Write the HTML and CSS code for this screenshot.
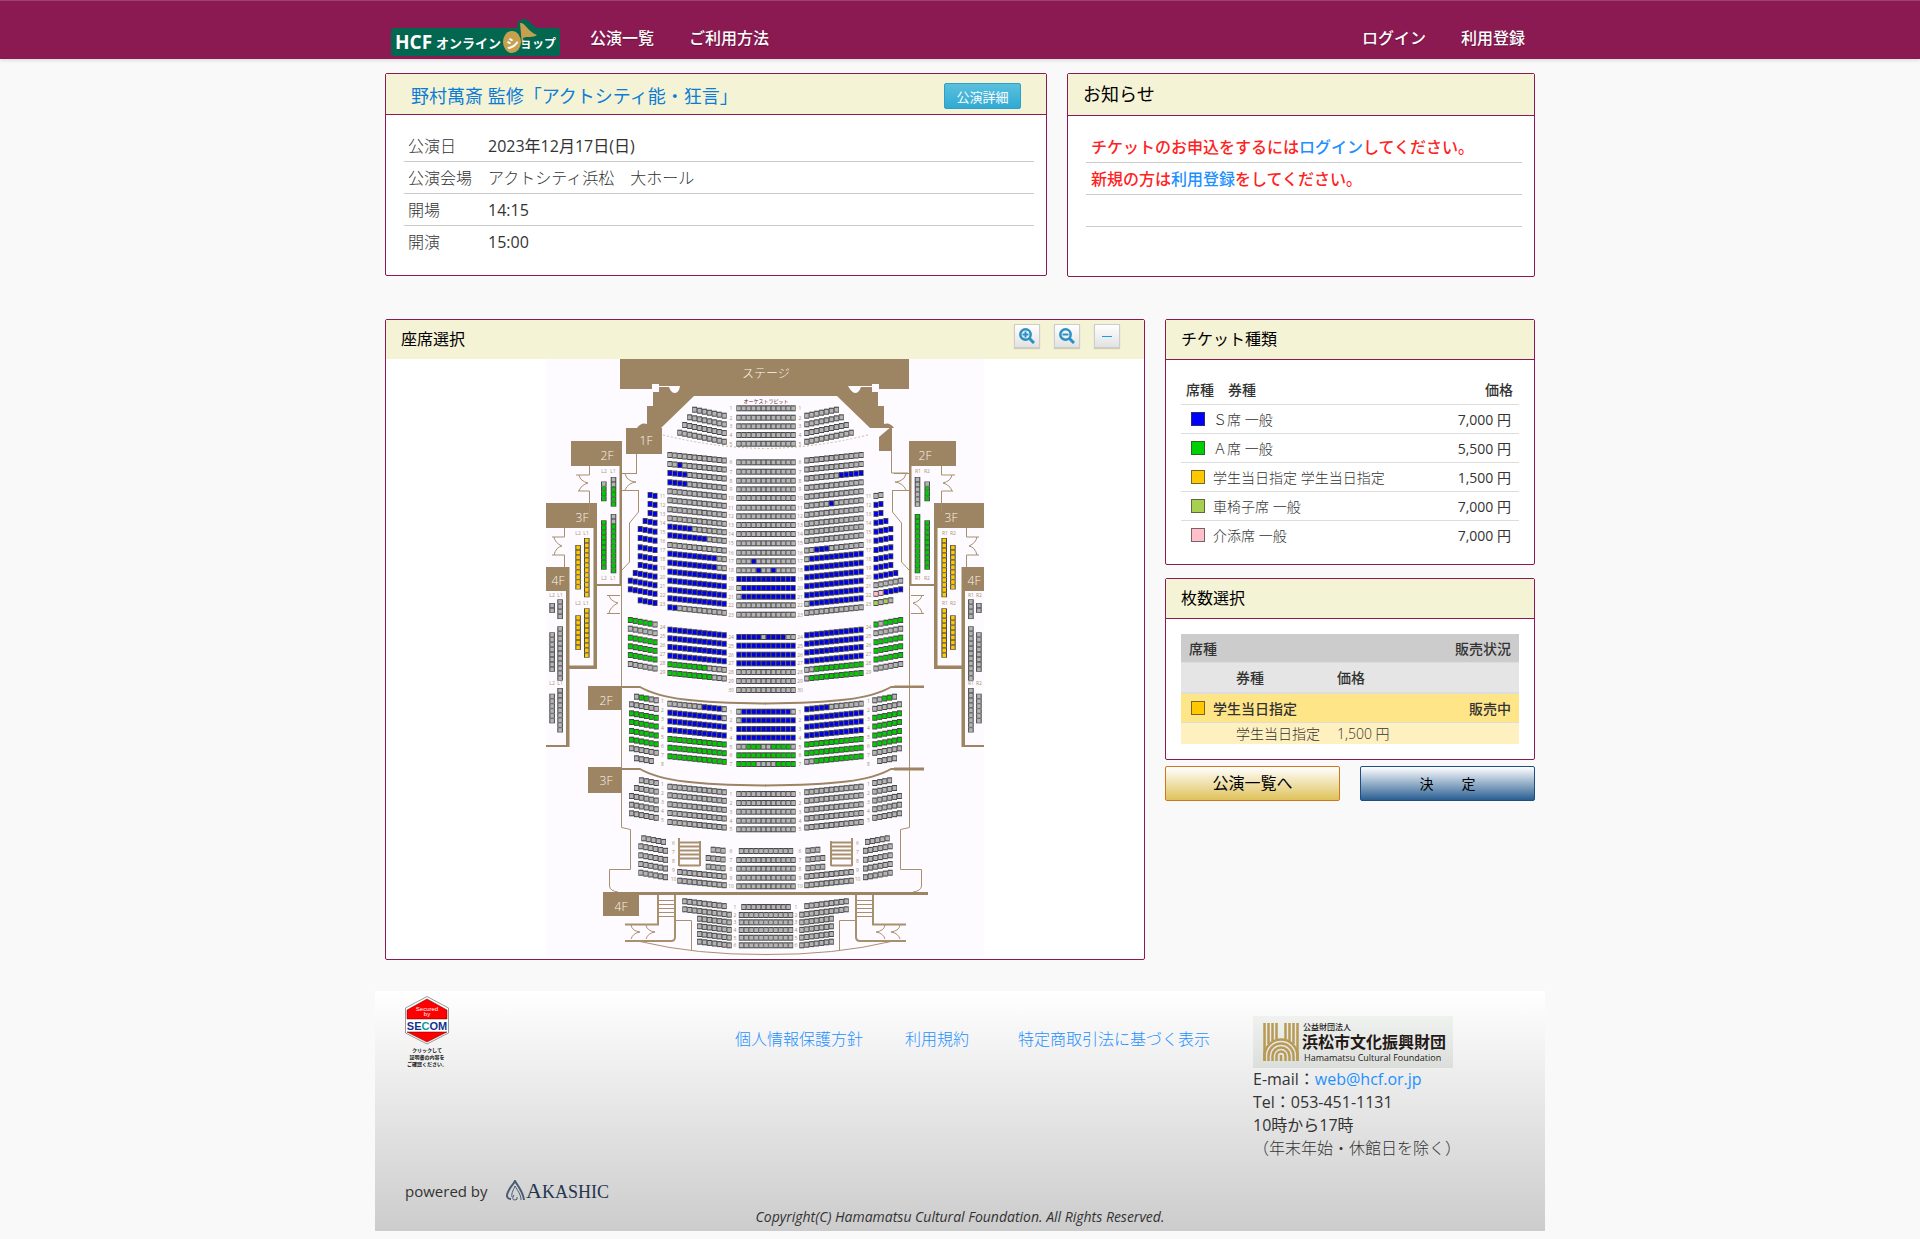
FILE: index.html
```html
<!DOCTYPE html>
<html lang="ja">

<head>
    <meta charset="UTF-8">
    <meta name="viewport" content="width=device-width, initial-scale=1.0">
    <link rel="stylesheet" href="styles.css">
    <title>HCFオンラインショップ</title>
</head>

<body>
    <header class="navbar">
        <div class="container navbar-inner">
            <a class="brand" href="#">
                <svg width="169" height="37" viewBox="0 0 169 37">
                    <path fill="#03664f" d="M3 9H126C126 3 129 0 133 0C138 0 138 4 146 9H166Q169 9 169 12V34Q169 37 166 37H3Q0 37 0 34V12Q0 9 3 9Z" />
                    <path fill="#c4a04f" d="M129 4C134 3 136 12 146 16C142 19 136 17 132 19L133 26H131Z" />
                    <ellipse cx="121" cy="23" rx="9" ry="11" fill="#c4a04f" />
                    <text x="4" y="30" class="logo-latin">HCF</text>
                    <text x="45" y="29" class="logo-kana">オンライン</text>
                    <text x="115" y="29" class="logo-kana">シ</text>
                    <text x="129" y="29" class="logo-kana logo-kana-end">ョップ</text>
                </svg>
            </a>
            <nav class="nav">
                <a href="#">公演一覧</a>
                <a href="#">ご利用方法</a>
            </nav>
            <nav class="nav nav-right">
                <a href="#">ログイン</a>
                <a href="#">利用登録</a>
            </nav>
        </div>
    </header>

    <main class="container main">
        <div class="row row-top">
            <section class="panel">
                <div class="panel-head event-head">
                    <h1><a href="#">野村萬斎 監修「アクトシティ能・狂言」</a></h1>
                    <button type="button" class="btn-info">公演詳細</button>
                </div>
                <dl class="event">
                    <div><dt>公演日</dt><dd>2023年12月17日(日)</dd></div>
                    <div><dt>公演会場</dt><dd class="hall">アクトシティ浜松　大ホール</dd></div>
                    <div><dt>開場</dt><dd>14:15</dd></div>
                    <div><dt>開演</dt><dd>15:00</dd></div>
                </dl>
            </section>
            <section class="panel">
                <div class="panel-head news-head">
                    <h2>お知らせ</h2>
                </div>
                <ul class="news">
                    <li>チケットのお申込をするには<a href="#">ログイン</a>してください。</li>
                    <li>新規の方は<a href="#">利用登録</a>をしてください。</li>
                    <li></li>
                </ul>
            </section>
        </div>

        <div class="row row-seat">
            <section class="panel">
                <div class="panel-head seat-head">
                    <h2>座席選択</h2>
                    <div class="zoom">
                        <button type="button" aria-label="拡大">
                            <svg width="16" height="16" viewBox="0 0 16 16">
                                <g fill="none" stroke="#2b90c4" stroke-width="2.500">
                                    <circle cx="6.500" cy="6.500" r="5.200" />
                                    <path stroke-width="2" d="M3.500 6.500H9.500M6.500 3.500V9.500" />
                                    <path stroke-width="3" d="M10.500 10.500L15 15" />
                                </g>
                            </svg>
                        </button>
                        <button type="button" aria-label="縮小">
                            <svg width="16" height="16" viewBox="0 0 16 16">
                                <g fill="none" stroke="#2b90c4" stroke-width="2.500">
                                    <circle cx="6.500" cy="6.500" r="5.200" />
                                    <path stroke-width="2" d="M3.500 6.500H9.500" />
                                    <path stroke-width="3" d="M10.500 10.500L15 15" />
                                </g>
                            </svg>
                        </button>
                        <button type="button" aria-label="閉じる">
                            <svg width="16" height="16" viewBox="0 0 16 16">
                                <path fill="#0fa3e6" d="M3 8H13V9H3Z" />
                            </svg>
                        </button>
                    </div>
                </div>
                <svg class="map" width="438" height="598" viewBox="0 0 438 598">
                    <defs>
                        <!-- left half of the hall, the right half is its mirror -->
                        <g id="half">
                            <path class="solid" d="M113 26V33H107V47H101V65Q95 63 91 69H115L148 37H220V26Z" />
                            <path class="solid" d="M29 82H76V226H73.500V107H29Z" />
                            <path class="solid" d="M0 144H51V225H76V227H51V310H23V306.500H47.500V169H0Z" />
                            <path class="solid" d="M0 208H23.500V388H0V386H20V232H0Z" />
                            <path class="thin" d="M75.500 226V468.500L84.500 470.500V510.500H63.500V527Q64 532 72 533" />
                            <path class="thin" d="M92.500 131V153L83.500 164V203L76 211" />
                            <path class="thin" d="M76 114.500H91M76 131.500H92M79 115Q80 120 85 122Q89 123 90 123Q82 124 79 131" />
                            <path class="thin" d="M43.500 107V116H30M43.500 152V132H32M33 116Q34 122 42 124Q35 126 33 132" />
                            <path class="thin" d="M18.500 169V178H6M18.500 208V196H6M8 178Q9 184 16 187Q10 188 8 196" />
                            <path class="thin" d="M74 236.500H61M74 254.500H61M63 236Q64 242 72 244Q64 248 63 254" />
                            <path class="dash" d="M117 76Q170 89 220 89.500" />
                            <path class="curve" d="M75 328H94C115 340 150 344 220 344.500" />
                            <path class="curve" d="M75 410H94C115 422 150 426 220 426.500" />
                            <path class="thin stair" d="M133 479V507M154 482V507M133 483.500H154M133 487.500H154M133 491.500H154M133 495.500H154M133 499.500H154M133 506.500H154" />
                            <path class="thin stair" d="M112 536V565M129 536V578Q129 582 125 582H79M79 565.500H113" />
                            <path class="thin" d="M112 541.500H129M112 545.500H129M112 549.500H129M112 553.500H129M112 557.500H129" />
                            <path class="thin" d="M130 561.500H145.500V591M94 582.500Q150 596 220 595.500" />
                            <path class="thin" d="M85 566Q86 572 94 573Q87 574 85 580M100 566Q101 572 109 573Q102 574 100 580" />
                        </g>
                    </defs>
                    <rect width="438" height="598" fill="#fdfbff" />
                    <path class="solid" d="M74 0H363V30H74Z" />
                    <use href="#half" />
                    <use href="#half" transform="matrix(-1 0 0 1 439 0)" />
                    <path fill="#fdfbff" d="M106 25H113V27H134Q133 34 129 34Q125 34 123 28H113V30H106ZM333 25H326V27H302Q306 34 309 34Q313 34 315 28H326V30H333Z" />
                    <path class="solid" d="M25 82H30V107H25ZM80 69H116V95H80ZM333 78L346 67V92H333Z" />
                    <path class="solid" d="M42 327H76V351H42ZM42 408H76V434H42ZM57 533H382V536H57ZM57 533H93V557H57Z" />
                    <path class="solid" d="M348 326.500H378V329H348ZM348 408.500H378V411.500H348Z" />
                    <path class="thin" d="M90.500 95V114M345.500 92V114H362" />
                    <g class="floor">
                        <text x="100" y="86">1F</text>
                        <text x="61" y="101">2F</text>
                        <text x="379" y="101">2F</text>
                        <text x="36" y="163">3F</text>
                        <text x="405" y="163">3F</text>
                        <text x="12" y="226">4F</text>
                        <text x="428" y="226">4F</text>
                        <text x="60" y="346">2F</text>
                        <text x="60" y="426">3F</text>
                        <text x="75" y="552">4F</text>
                        <text x="220" y="19">ステージ</text>
                    </g>
                    <text class="pit" x="220" y="44">オーケストラピット</text>
                    <g id="seats"></g>
                    <g id="labels" class="labels"></g>
                </svg>
            </section>

            <div class="side">
                <section class="panel">
                    <div class="panel-head">
                        <h2>チケット種類</h2>
                    </div>
                    <table class="types">
                        <thead>
                            <tr><th>席種　券種</th><th class="num">価格</th></tr>
                        </thead>
                        <tbody>
                            <tr><td><span class="swatch s"></span>Ｓ席 一般</td><td class="num">7,000 円</td></tr>
                            <tr><td><span class="swatch a"></span>Ａ席 一般</td><td class="num">5,500 円</td></tr>
                            <tr><td><span class="swatch student"></span>学生当日指定 学生当日指定</td><td class="num">1,500 円</td></tr>
                            <tr><td><span class="swatch wheel"></span>車椅子席 一般</td><td class="num">7,000 円</td></tr>
                            <tr><td><span class="swatch helper"></span>介添席 一般</td><td class="num">7,000 円</td></tr>
                        </tbody>
                    </table>
                </section>

                <section class="panel">
                    <div class="panel-head">
                        <h2>枚数選択</h2>
                    </div>
                    <table class="count">
                        <colgroup>
                            <col class="col-indent">
                            <col class="col-name">
                            <col>
                            <col>
                        </colgroup>
                        <tr class="count-head"><th colspan="2">席種</th><th colspan="2" class="num">販売状況</th></tr>
                        <tr class="count-sub"><th></th><th>券種</th><th colspan="2">価格</th></tr>
                        <tr class="count-seat"><th colspan="2"><span class="swatch student"></span>学生当日指定</th><th colspan="2" class="num">販売中</th></tr>
                        <tr class="count-item"><td></td><td>学生当日指定</td><td colspan="2">1,500 円</td></tr>
                    </table>
                </section>

                <div class="actions">
                    <button type="button" class="btn-back">公演一覧へ</button>
                    <button type="button" class="btn-ok">決　　定</button>
                </div>
            </div>
        </div>
    </main>

    <footer class="container footer">
        <a class="secom" href="#">
            <svg width="44" height="72" viewBox="0 0 44 72">
                <path fill="#fff" stroke="#999" d="M22 .500L43.500 12V37L22 48L.500 37V12Z" />
                <path fill="#f00" stroke="#600" stroke-width=".500" d="M22 3L42 14V23H2V14ZM2 36H42L22 46Z" />
                <text x="22" y="15" class="secom-small">Secured</text>
                <text x="22" y="20" class="secom-small">by</text>
                <text x="22" y="34" class="secom-name">SE<tspan fill="#0a9a92">C</tspan>OM</text>
                <text x="22" y="56" class="secom-note">クリックして</text>
                <text x="22" y="63" class="secom-note">証明書の内容を</text>
                <text x="22" y="70" class="secom-note">ご確認ください。</text>
            </svg>
        </a>
        <nav class="footer-links">
            <a href="#">個人情報保護方針</a>
            <a href="#">利用規約</a>
            <a href="#">特定商取引法に基づく表示</a>
        </nav>
        <div class="contact">
            <svg width="200" height="52" viewBox="0 0 200 52">
                <defs>
                    <linearGradient id="plate" x2="0" y2="1">
                        <stop stop-color="#f0f2f0" />
                        <stop offset="1" stop-color="#dcdedc" />
                    </linearGradient>
                </defs>
                <rect width="200" height="52" fill="url(#plate)" />
                <g fill="none" stroke="#b89a55" stroke-width="2.500">
                    <path d="M11.500 7V45M15.500 7V28M19.500 7V25M23.500 7V23M32.500 7V23M36.500 7V25M40.500 7V28M44.500 7V45" />
                    <path d="M11.500 45V40A16.500 16.500 0 0 1 44.500 40V45M15.500 45V40A12.500 12.500 0 0 1 40.500 40V45M19.500 45V40A8.500 8.500 0 0 1 36.500 40V45M23.500 45V40A4.500 4.500 0 0 1 32.500 40V45M28 45V39" />
                </g>
                <text x="50" y="14" class="hcf-type">公益財団法人</text>
                <text x="49" y="32" class="hcf-name">浜松市文化振興財団</text>
                <text x="51" y="45" class="hcf-en">Hamamatsu Cultural Foundation</text>
            </svg>
            <p>E-mail：<a href="#">web@hcf.or.jp</a></p>
            <p>Tel：053-451-1131</p>
            <p>10時から17時</p>
            <p class="closed">（年末年始・休館日を除く）</p>
        </div>
        <div class="powered">
            powered by
            <svg width="112" height="22" viewBox="0 0 112 22">
                <g fill="none" stroke="#4a5b73">
                    <path stroke-width="2" d="M5 19C1 19 0 16 2 12C4 7 7 5 9 1C11 5 17 11 18 20" />
                    <path d="M6 17C5 13 8 9 9 6C11 10 15 14 15 20M8 15Q5 20 9 20Q12 20 11 17" />
                </g>
                <text x="20" y="18" class="akashic"><tspan class="akashic-big">A</tspan>KASHIC</text>
            </svg>
        </div>
        <p class="copyright">Copyright(C) Hamamatsu Cultural Foundation. All Rights Reserved.</p>
    </footer>

    <script src="seats.js"></script>
</body>

</html>
```

FILE: styles.css
```css
* {
    box-sizing: border-box;
}

body {
    margin: 0;
    padding-bottom: 8px;
    background-color: #f9f9f9;
    color: #333;
    font-family: "Open Sans", "Noto Sans CJK JP", sans-serif;
    font-size: 16px;
    line-height: 23px;
}

h1,
h2,
p,
ul,
dl,
dd {
    margin: 0;
    padding: 0;
}

a {
    color: #1e90ff;
    text-decoration: none;
}

button {
    font-family: inherit;
    cursor: pointer;
}

.container {
    max-width: 1170px;
    margin: 0 auto;
}

/* navbar */
.navbar {
    background-color: #8b1a53;
    border-top: 1px solid #9f4170;
    box-shadow: 0 1px 4px rgba(0, 0, 0, 0.15);
}

.navbar-inner {
    display: flex;
    align-items: flex-end;
    height: 58px;
    padding: 0 20px 3px 16px;
}

.brand {
    display: flex;
    margin-right: 30px;
}

.nav {
    display: flex;
    gap: 35px;
    margin-bottom: 6px;
}

.nav a {
    color: #fff;
    font-weight: 500;
    text-shadow: 0 1px 1px rgba(0, 0, 0, 0.3);
}

.nav-right {
    margin-left: auto;
}

.logo-latin {
    font: bold 19px "Open Sans", sans-serif;
    fill: #fff;
}

.logo-kana {
    font: bold 13px "Noto Sans CJK JP", sans-serif;
    fill: #fff;
}

.logo-kana-end {
    font-size: 12px;
}

/* panels */
.main {
    padding: 14px 10px 31px;
}

.row {
    display: grid;
    gap: 20px;
    align-items: start;
}

.row-top {
    grid-template-columns: 662fr 468fr;
    margin-bottom: 42px;
}

.row-seat {
    grid-template-columns: 760fr 370fr;
}

.panel {
    border: 1px solid #8b1a53;
    border-radius: 2px;
    background-color: #fff;
}

.panel-head {
    display: flex;
    align-items: center;
    height: 40px;
    padding: 0 15px;
    border-bottom: 1px solid #8b1a53;
    background-color: #f5f3d5;
}

.panel-head h1,
.panel-head h2 {
    color: #000;
    font-size: 16px;
    font-weight: normal;
}

.event-head {
    justify-content: space-between;
    height: 41px;
    padding: 4px 25px 0;
}

.panel-head.event-head h1,
.panel-head.news-head h2 {
    font-size: 18px;
}

.event-head a {
    color: #0c7cd5;
}

.btn-info {
    width: 77px;
    height: 26px;
    padding: 0;
    border: 1px solid #2f9fc4;
    border-radius: 2px;
    background: linear-gradient(#5bc0de, #2faad4);
    color: #fff;
    font-size: 13px;
}

.news-head {
    height: 42px;
}

.event {
    padding: 15px 12px 17px 18px;
}

.event div {
    display: flex;
    height: 32px;
    padding: 5px 4px;
    border-bottom: 1px solid #ccc;
}

.event div:last-child {
    border-bottom: 0;
}

.event dt {
    width: 80px;
}

.event dt,
.event .hall,
.footer-links a,
.contact .closed {
    font-weight: 300;
}

.news {
    padding: 15px 12px 49px 18px;
    list-style: none;
}

.news li {
    height: 32px;
    padding: 5px;
    border-bottom: 1px solid #ccc;
    color: #f22;
    font-weight: 500;
}

/* seat map */
.seat-head {
    height: 39px;
    padding-right: 24px;
    border-bottom: 0;
}

.zoom {
    display: flex;
    gap: 14px;
    margin: 0 0 8px auto;
}

.zoom button {
    display: flex;
    align-items: center;
    justify-content: center;
    width: 26px;
    height: 24px;
    padding: 0;
    border: 1px solid #ccc;
    background: linear-gradient(#fff, #e2e2e2);
    box-shadow: 0 1px 1px rgba(0, 0, 0, 0.15);
}

.map {
    display: block;
    margin: 0 auto 2px;
}

.solid {
    fill: #9d8463;
}

.thin {
    fill: none;
    stroke: #a8906f;
}

.stair {
    stroke-width: 2;
}

.curve {
    fill: none;
    stroke: #9d8463;
    stroke-width: 2;
}

.dash {
    fill: none;
    stroke: #cbbca6;
    stroke-dasharray: 2 2;
}

.floor text {
    fill: #fdf5e6;
    font-size: 12px;
    font-weight: 300;
    text-anchor: middle;
}

.pit {
    fill: #5c2a1c;
    font-size: 5px;
    text-anchor: middle;
}

.labels {
    fill: #a8906f;
    font-size: 5px;
    text-anchor: middle;
}

/* ticket tables */
.side {
    display: flex;
    flex-direction: column;
}

.side .panel {
    margin-bottom: 13px;
}

.side .panel + .panel {
    margin-bottom: 6px;
}

table {
    border-collapse: separate;
    border-spacing: 0;
    font-size: 14px;
    line-height: 19px;
}

th {
    font-weight: 500;
    text-align: left;
}

td {
    font-weight: 300;
}

th.num,
td.num {
    text-align: right;
}

td.num {
    font-weight: normal;
}

.types {
    width: calc(100% - 30px);
    margin: 15px 15px 14px;
}

.types th,
.types td {
    height: 29px;
    padding: 0 8px 0 10px;
    border-bottom: 1px solid #ddd;
}

.types th {
    height: 30px;
    padding: 0 6px 0 5px;
}

.types tr:last-child td {
    border-bottom: 0;
}

.swatch {
    display: inline-block;
    width: 14px;
    height: 14px;
    margin-right: 8px;
    border: 1px solid rgba(60, 60, 60, 0.7);
    vertical-align: -1px;
}

.s {
    background-color: #00f;
}

.a {
    background-color: #00d000;
}

.student {
    background-color: #ffc800;
}

.wheel {
    background-color: #a8d050;
}

.helper {
    background-color: #ffc0cb;
}

.count {
    table-layout: fixed;
    width: calc(100% - 30px);
    margin: 15px;
}

.col-indent {
    width: 47px;
}

.col-name {
    width: 101px;
}

.count th,
.count td {
    padding: 0 8px;
    white-space: nowrap;
}

.count-head th {
    height: 29px;
    border-bottom: 1px solid #ddd;
    background-color: #ccc;
}

.count-sub th {
    height: 31px;
    border-bottom: 2px solid #ddd;
    background-color: #e5e5e5;
}

.count-seat th {
    height: 29px;
    border-bottom: 1px solid #ddd;
    background-color: #fee588;
}

.count .swatch {
    margin-left: 2px;
}

.count-item td {
    height: 21px;
    background-color: #fff0c0;
}

.actions {
    display: grid;
    grid-template-columns: 1fr 1fr;
    gap: 20px;
}

.actions button {
    height: 35px;
    padding: 0;
    border-radius: 2px;
    color: #000;
    font-size: 16px;
    line-height: 23px;
}

.actions .btn-back {
    border: 1px solid #d2761c;
    background: linear-gradient(#fff, #dfc25a);
}

.actions .btn-ok {
    border: 1px solid #1d4f80;
    background: linear-gradient(#fff, #2a5f92);
    font-size: 14px;
}

/* footer */
.footer {
    display: grid;
    grid-template-columns: 330px 1fr 262px;
    grid-template-rows: 186px 28px 26px;
    padding: 0 30px;
    background: linear-gradient(#fff, #ccc);
}

.secom {
    padding-top: 5px;
}

.footer-links {
    display: flex;
    padding-top: 37px;
}

.footer-links a {
    margin-right: 42px;
}

.footer-links a:last-child {
    margin: 0 0 0 7px;
}

.contact {
    padding-top: 25px;
}

.contact svg {
    display: block;
}

.powered {
    display: flex;
    grid-column: 1 / -1;
    align-items: center;
    gap: 18px;
    font-size: 15px;
}

.copyright {
    grid-column: 1 / -1;
    font-size: 14px;
    font-style: italic;
    text-align: center;
}

.secom-small {
    font: 6px "Liberation Sans", sans-serif;
    fill: #fff;
    text-anchor: middle;
}

.secom-name {
    font: bold 11px "Liberation Sans", sans-serif;
    fill: #14328c;
    text-anchor: middle;
}

.secom-note {
    font: bold 5px "Noto Sans CJK JP", sans-serif;
    fill: #111;
    text-anchor: middle;
}

.hcf-type {
    font: 500 8px "Noto Sans CJK JP", sans-serif;
    fill: #231815;
}

.hcf-name {
    font: bold 16px "Noto Sans CJK JP", sans-serif;
    fill: #231815;
}

.hcf-en {
    font: 500 9px "Open Sans", sans-serif;
    fill: #231815;
}

.akashic {
    font: 18px "Liberation Serif", serif;
    fill: #24364f;
}

.akashic-big {
    font-size: 22px;
}
```

FILE: seats.js
```javascript
const NS = 'http://www.w3.org/2000/svg';
const WIDTH = 439;
const PITCH = 4.94;
const COLORS = {
    g: '#b4b4b4',
    b: '#0000f0',
    n: '#00cc00',
    y: '#ffc800',
    w: '#a8d050',
    p: '#ffc0cb'
};

const seats = document.getElementById('seats');
const labels = document.getElementById('labels');

const rect = (x, y, w, h, fill) => {
    const el = document.createElementNS(NS, 'rect');
    el.setAttribute('x', x);
    el.setAttribute('y', y);
    el.setAttribute('width', w);
    el.setAttribute('height', h);
    el.setAttribute('fill', fill);
    seats.appendChild(el);
};

const label = (x, y, text) => {
    const el = document.createElementNS(NS, 'text');
    el.setAttribute('x', x);
    el.setAttribute('y', y + 2);
    el.textContent = text;
    labels.appendChild(el);
};

// "b3g2" -> "bbbgg"
const expand = (code) => code.replace(/([a-z])(\d+)/g, (m, c, n) => c.repeat(n));

// one row of seats, y is the middle of the first seat
const row = (x, y, slope, code) => {
    [...expand(code)].forEach((c, i) => {
        const sx = x + i * PITCH;
        const sy = y + i * slope;
        rect(sx, sy - 3, PITCH, 6, '#484848');
        rect(sx + 0.6, sy - 1.9, PITCH - 1.2, 3.9, COLORS[c]);
    });
};

const column = (x, y, code) => {
    [...expand(code)].forEach((c, i) => {
        const sy = y + i * PITCH;
        rect(x, sy, 5.6, PITCH, '#484848');
        rect(x + 1, sy + 0.6, 3.6, PITCH - 1.2, COLORS[c]);
    });
};

// left row ends at x = end, right row is placed opposite to it
const pair = (end, y, slope, left, right) => {
    const l = expand(left);
    const r = expand(right || left);
    row(end - l.length * PITCH, y, slope, l);
    row(WIDTH - end, y + (r.length - 1) * slope, -slope, r);
};

const columns = (x, y, left, right) => {
    column(x, y, left);
    column(WIDTH - x - 5.6, y, right || left);
};

// centre block: y, seats, row number
[
    [49.3, 'g12', 1], [58.7, 'g12', 2], [67.3, 'g12', 3], [76, 'g12', 4], [84.7, 'g12', 5],
    [103.3, 'g12', 6], [112.7, 'g12', 7], [121.7, 'g12', 8], [130.3, 'g12', 9], [139, 'g12', 10],
    [148.7, 'g12', 11], [157.3, 'g12', 12], [166, 'g12', 13], [175, 'g12', 14], [184.3, 'g12', 15],
    [193.7, 'g12', 16], [202.3, 'g3bg8', 17], [211.3, 'g4bg2bg4', 18], [220, 'b12', 19],
    [229, 'gb11', 20], [237.7, 'gb11', 21], [246.3, 'g12', 22], [255.7, 'g12', 23],
    [278, 'b5gb4g2', 24], [286.7, 'b12', 25], [295.7, 'b12', 26], [304.3, 'b12', 27],
    [313, 'g12', 28], [322, 'g12', 29], [331, 'g12', 30],
    [352.7, 'gb10g', 1], [361.3, 'gb11', 2], [370, 'b12', 3], [378.7, 'b12', 4],
    [387.7, 'g2n3g2n4g', 5], [396.3, 'n12', 6], [405, 'n4g4n4', 7],
    [435, 'g12', 1], [444, 'g12', 2], [452.7, 'g12', 3], [461.7, 'g12', 4], [470.3, 'g12', 5],
    [492, 'g11', 6], [501, 'g12', 7], [509.7, 'g12', 8], [518.7, 'g12', 9], [527.3, 'g12', 10],
    [548, 'g10', 1], [556, 'g11', 2], [563.3, 'g11', 3], [571, 'g11', 4], [578.7, 'g11', 5], [586.3, 'g11', 6]
].forEach(([y, code, no]) => {
    row(220 - expand(code).length * PITCH / 2, y, 0, code);
    const x = y > 540 ? 189 : 185;
    label(x, y, no);
    label(WIDTH - x, y, no);
});

// blocks next to the centre
[
    [50.7, 'g7'], [58.3, 'g8'], [66, 'g9'], [73.7, 'g10']
].forEach(([y, l]) => pair(180.7, y, 1, l));

[
    [96, 'g12'], [105, 'g2bg9', 'g12'], [114, 'b4g8', 'g7b5'], [123.3, 'b4g8', 'g12'],
    [132.3, 'g12'], [141.3, 'g12', 'g5bg6'], [150.3, 'g12'], [159.3, 'g12'],
    [167.7, 'b5g7', 'g12'], [176.3, 'b8g4', 'g12'], [186, 'g12', 'g2b3g7'],
    [194.7, 'b10g2', 'gb11'], [203.7, 'b10g2', 'b12'], [212.7, 'b12'], [221.7, 'b12'],
    [230.7, 'b12'], [239.3, 'b12', 'gb11'], [248.3, 'b2g10', 'g12'],
    [270.7, 'b12'], [279.3, 'b12'], [288, 'b12'], [296.7, 'b12'],
    [305.3, 'n8g4', 'g2n10'], [314, 'n9g3', 'gn11'],
    [344.7, 'g7b4g', 'b5g7'], [353.7, 'b11g', 'b12'], [362.3, 'b12'], [371, 'b12'],
    [380, 'n12'], [388.7, 'n12'], [397.3, 'n12', 'g2n10'],
    [427.7, 'g12'], [436.3, 'g12'], [445.3, 'g12'], [454, 'g12'], [463, 'g12'],
    [513, 'g10'], [521.7, 'g10']
].forEach(([y, l, r]) => pair(180.7, y, 0.5, l, r));

[[490.7, 'g3'], [499, 'g4'], [507.7, 'g4']].forEach(([y, l]) => pair(179.5, y, 0.5, l));
pair(180.7, 542.3, 0.6, 'g9');
pair(185.7, 550.3, 0.6, 'g10');
[559.7, 567.3, 575, 582.7].forEach((y) => pair(185.7, y, 0.6, 'g7'));

// outer wings
[
    [136, 'b2', 'g2'], [145, 'b2'], [154, 'b2'], [162, 'b3'], [170, 'b4'], [179, 'b4'],
    [188.3, 'b4'], [197.3, 'b4'], [206, 'b4'], [214, 'b5'], [221.7, 'b6', 'g6'],
    [230.3, 'b6', 'p2b4'], [241.3, 'b4', 'wgwg'],
    [261, 'n5g', 'ngn4'], [269.7, 'g6'], [278.7, 'n6'], [287.3, 'n6'], [296, 'n6'], [305, 'g6']
].forEach(([y, l, r]) => pair(111.5, y, 0.9, l, r));

[
    [337.7, 'gn2g2', 'g2n2g'], [345.3, 'g6'], [354.3, 'n6'], [363, 'n6'], [372, 'n6'],
    [380.7, 'n6'], [389.3, 'g6'],
    [421.3, 'g4'], [429, 'g5'], [437, 'g6'], [445.7, 'g6'], [454.3, 'g6']
].forEach(([y, l, r]) => pair(112.7, y, 0.9, l, r));
pair(107.8, 399.3, 0.9, 'g4');
pair(120, 479.3, 0.9, 'g5');
[487.3, 496.3, 505, 513.7].forEach((y) => pair(122, y, 0.9, 'g6'));

// row numbers of the wings: x, y, first, last
[
    [116.5, 136.7, 11, 23], [116.5, 268, 24, 29], [116.5, 342, 1, 8],
    [116.5, 425.3, 1, 5], [127.5, 484.3, 6, 10]
].forEach(([x, y, first, last]) => {
    for (let no = first; no <= last; no++) {
        label(x, y + (no - first) * 9, no);
        label(WIDTH - x, y + (no - first) * 9, no);
    }
});

// balconies
columns(55, 122.5, 'gn3');
columns(64.7, 118, 'g2n4', 'g6');
columns(55, 161.3, 'n10');
columns(64.7, 155, 'g2n10', 'n12');
columns(29.3, 186, 'y9');
columns(38, 179, 'y12');
columns(29.3, 256.3, 'y7');
columns(38, 249.3, 'y10');
columns(3.3, 244, 'g2');
columns(11.3, 240.3, 'g4');
columns(3.3, 273.3, 'g8');
columns(11.3, 267.3, 'g11');
columns(3.3, 334.7, 'g6');
columns(11.3, 329, 'g9');

[
    [58, 112], [67, 112], [58, 219], [67, 219], [32, 174], [40, 174],
    [32, 244], [40, 244], [6, 236], [14, 236], [6, 324], [14, 324]
].forEach(([x, y], i) => {
    const text = i % 2 ? 'L1' : 'L2';
    label(x, y, text);
    label(WIDTH - x, y, text.replace('L', 'R'));
});
```
